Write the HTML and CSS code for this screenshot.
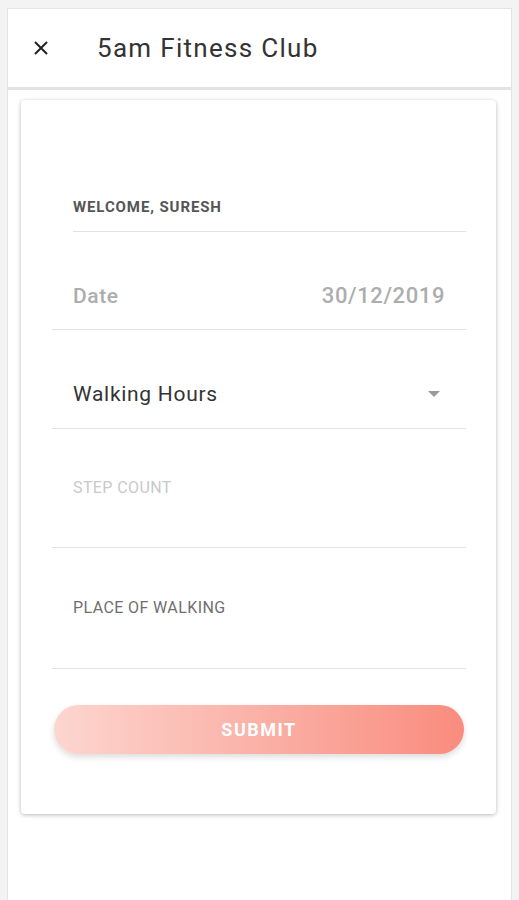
FILE: index.html
```html
<!DOCTYPE html>
<html lang="en">
<head>
  <meta charset="UTF-8">
  <title>5am Fitness Club</title>
  <meta name="viewport" content="width=device-width, initial-scale=1.0">
  <link rel="stylesheet" href="styles.css">
</head>
<body>
  <div class="frame">
    <header class="app-bar">
      <span class="close-btn">
        <svg width="16" height="16" viewBox="0 0 16 16">
          <path d="M2 2 L14 14 M14 2 L2 14" stroke="#222" stroke-width="2" fill="none"/>
        </svg>
      </span>
      <h1>5am Fitness Club</h1>
    </header>

    <div class="content">
      <div class="card">
        <form id="walkForm">
          <div class="field welcome">WELCOME, SURESH</div>

          <div class="field date-row">
            <span class="date-label">Date</span>
            <span class="date-value">30/12/2019</span>
          </div>

          <div class="field select-row">
            <span>Walking Hours</span>
            <span class="caret"></span>
          </div>

          <div class="field input-row">
            <label class="step-label" for="steps">STEP COUNT</label>
          </div>

          <div class="field input-row place">
            <label class="place-label" for="place">PLACE OF WALKING</label>
          </div>

          <button type="submit">SUBMIT</button>
        </form>
      </div>
    </div>
  </div>
</body>
</html>
```

FILE: styles.css
```css
* {
  box-sizing: border-box;
}
body {
  margin: 0;
  background: #f3f3f3;
  font-family: Roboto, "Noto Sans", sans-serif;
}
.frame {
  margin: 8px 7px 0 7px;
  background: #fff;
  border: 1px solid #e4e4e4;
  border-bottom: none;
  min-height: 892px;
}
.app-bar {
  height: 81px;
  display: flex;
  align-items: center;
  border-bottom: 3px solid #e3e3e3;
}
.close-btn {
  width: 16px;
  height: 16px;
  margin-left: 25px;
  display: flex;
}
.app-bar h1 {
  margin: 0 0 0 48px;
  font-size: 26px;
  font-weight: 400;
  letter-spacing: 1.3px;
  color: #333;
}
.content {
  padding: 10px 15px 0 13px;
}
.card {
  background: #fff;
  border-radius: 4px;
  box-shadow: 0 1px 4px rgba(0,0,0,0.28);
  padding: 32px 30px 60px 31px;
}
.field {
  display: flex;
  align-items: flex-end;
  border-bottom: 1px solid #e2e2e2;
  padding-left: 21px;
  padding-right: 21px;
}
.welcome {
  height: 100px;
  margin-left: 21px;
  padding-left: 0;
  padding-bottom: 15px;
  font-size: 15px;
  font-weight: 700;
  letter-spacing: 0.9px;
  color: #555;
  line-height: 18px;
}
.date-row {
  height: 98px;
  justify-content: space-between;
  padding-bottom: 21px;
  font-size: 21px;
  font-weight: 500;
  letter-spacing: 0.6px;
  color: #adadad;
  line-height: 24px;
}
.date-value {
  font-size: 22px;
}
.select-row {
  height: 99px;
  justify-content: space-between;
  align-items: center;
  padding-top: 30px;
  padding-right: 26px;
  font-size: 21px;
  letter-spacing: 0.7px;
  color: #333;
}
.caret {
  width: 0;
  height: 0;
  border-left: 6px solid transparent;
  border-right: 6px solid transparent;
  border-top: 6px solid #9a9a9a;
}
.input-row {
  height: 119px;
  align-items: flex-start;
  padding-top: 50px;
  font-size: 16px;
  letter-spacing: 0.4px;
  line-height: 18px;
}
.input-row.place {
  height: 121px;
  padding-top: 51px;
}
.step-label {
  color: #c9c9c9;
}
.place-label {
  color: #6f6f6f;
}
button {
  display: block;
  width: 410px;
  height: 49px;
  margin: 36px 0 0 2px;
  border: none;
  border-radius: 25px;
  background: linear-gradient(to right, #fcd6cf, #f98c7e);
  box-shadow: 0 3px 6px rgba(0,0,0,0.14);
  color: #fff;
  font-family: Roboto, sans-serif;
  font-size: 18px;
  font-weight: 700;
  letter-spacing: 1.5px;
  cursor: pointer;
}
```
